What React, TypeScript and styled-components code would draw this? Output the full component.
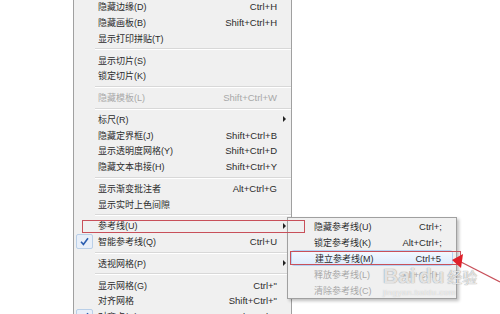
import React from 'react';
import styled, { createGlobalStyle } from 'styled-components';

const GlobalStyle = createGlobalStyle`
  html, body {
    margin: 0;
    padding: 0;
    background: #ffffff;
  }
`;

const Page = styled.div`
  position: relative;
  width: 500px;
  height: 314px;
  overflow: hidden;
  background: #ffffff;
  font-family: 'Liberation Sans', 'Noto Sans CJK SC', sans-serif;
`;

const Menu = styled.div`
  box-sizing: border-box;
  width: 219px;
  margin-left: 73px;
  margin-top: -1px;
  background: #f0f0f0;
  border-left: 1px solid #a0a0a0;
  border-right: 1px solid #a0a0a0;
`;

const Row = styled.div<{ $h?: number; $pl?: number; $pr?: number }>`
  display: flex;
  align-items: center;
  height: ${(p) => p.$h ?? 15.75}px;
  padding-left: ${(p) => p.$pl ?? 0}px;
  padding-right: ${(p) => p.$pr ?? 0}px;
  box-sizing: border-box;
`;

const HiRow = styled(Row)`
  margin: 0 3px;
  padding-left: ${(p) => (p.$pl ?? 0) - 3}px;
  padding-right: ${(p) => (p.$pr ?? 0) - 3}px;
  border: 1px solid #b4d2f4;
  border-radius: 3px;
  background: linear-gradient(#f4f9ff, #dcebfc);
`;

const Gutter = styled.div`
  width: 24px;
  height: 100%;
  display: flex;
  align-items: center;
  flex: none;
`;

const CheckBox = styled.div`
  box-sizing: border-box;
  width: 17px;
  height: 15px;
  margin-left: 2px;
  border: 1px solid #b9cfe8;
  border-radius: 2px;
  background: #e8eff9;
  display: flex;
  align-items: center;
  justify-content: center;
`;

const Label = styled.span<{ $off?: boolean }>`
  flex: 1;
  font-size: 9px;
  white-space: nowrap;
  color: ${(p) => (p.$off ? '#a8a8a8' : '#2c2c2c')};
`;

const Keys = styled.span<{ $off?: boolean }>`
  font-size: 9.5px;
  white-space: nowrap;
  color: ${(p) => (p.$off ? '#a8a8a8' : '#2c2c2c')};
`;

const ArrowCell = styled.div`
  width: 14px;
  flex: none;
  display: flex;
  justify-content: center;
  padding-left: 1px;
  box-sizing: border-box;
`;

const Caret = styled.span`
  width: 0;
  height: 0;
  border-top: 3px solid transparent;
  border-bottom: 3px solid transparent;
  border-left: 3px solid #222;
`;

const Sep = styled.div`
  height: 6px;
  display: flex;
  align-items: center;
  padding-left: 21px;
`;

const SepLine = styled.div`
  flex: 1;
  height: 0;
  border-top: 1px solid #d8d8d8;
  border-bottom: 1px solid #ffffff;
`;

const Sub = styled.div`
  position: absolute;
  left: 287px;
  top: 217px;
  width: 170px;
  box-sizing: border-box;
  padding: 0;
  background: #f0f0f0;
  border: 1px solid #a0a0a0;
  box-shadow: 2px 2px 3px rgba(0, 0, 0, 0.25);
`;

const RedBox = styled.div<{ $x: number; $y: number; $w: number; $h: number }>`
  position: absolute;
  left: ${(p) => p.$x}px;
  top: ${(p) => p.$y}px;
  width: ${(p) => p.$w}px;
  height: ${(p) => p.$h}px;
  box-sizing: border-box;
  border: 1.5px solid #c8505a;
`;

const Mark = styled.div`
  position: absolute;
  left: 383px;
  top: 264px;
  display: flex;
  flex-direction: column;
  align-items: flex-start;
  pointer-events: none;
`;

const MarkTop = styled.div`
  display: flex;
  align-items: center;
  gap: 3px;
  color: rgba(255, 255, 255, 0.75);
  text-shadow: 0 0 1px rgba(120, 120, 120, 0.6), 0 0 1px rgba(120, 120, 120, 0.6);
`;

const MarkBig = styled.span`
  font-family: 'Liberation Sans', sans-serif;
  font-size: 21px;
  font-weight: bold;
`;

const MarkCn = styled.span`
  font-family: 'Noto Sans CJK SC', sans-serif;
  font-size: 15px;
`;

const MarkUrl = styled.span`
  font-size: 8px;
  letter-spacing: 0.5px;
  color: rgba(255, 255, 255, 0.7);
  text-shadow: 0 0 1px rgba(120, 120, 120, 0.5);
`;

const Overlay = styled.svg`
  position: absolute;
  left: 0;
  top: 0;
  pointer-events: none;
`;

type Item =
  | { sep: true }
  | { label: string; keys?: string; off?: boolean; sub?: boolean; check?: boolean };

const items: Item[] = [
  { label: '隐藏边缘(D)', keys: 'Ctrl+H' },
  { label: '隐藏画板(B)', keys: 'Shift+Ctrl+H' },
  { label: '显示打印拼贴(T)' },
  { sep: true },
  { label: '显示切片(S)' },
  { label: '锁定切片(K)' },
  { sep: true },
  { label: '隐藏模板(L)', keys: 'Shift+Ctrl+W', off: true },
  { sep: true },
  { label: '标尺(R)', sub: true },
  { label: '隐藏定界框(J)', keys: 'Shift+Ctrl+B' },
  { label: '显示透明度网格(Y)', keys: 'Shift+Ctrl+D' },
  { label: '隐藏文本串接(H)', keys: 'Shift+Ctrl+Y' },
  { sep: true },
  { label: '显示渐变批注者', keys: 'Alt+Ctrl+G' },
  { label: '显示实时上色间隙' },
  { sep: true },
  { label: '参考线(U)', sub: true },
  { label: '智能参考线(Q)', keys: 'Ctrl+U', check: true },
  { sep: true },
  { label: '透视网格(P)', sub: true },
  { sep: true },
  { label: '显示网格(G)', keys: 'Ctrl+"' },
  { label: '对齐网格', keys: 'Shift+Ctrl+"' },
  { label: '对齐点(N)', keys: 'Alt+Ctrl+"', check: true },
];

const subItems = [
  { label: '隐藏参考线(U)', keys: 'Ctrl+;' },
  { label: '锁定参考线(K)', keys: 'Alt+Ctrl+;' },
  { label: '建立参考线(M)', keys: 'Ctrl+5', hi: true },
  { label: '释放参考线(L)', keys: 'Alt+Ctrl+;', off: true },
  { label: '清除参考线(C)', off: true },
];

const Check = () => (
  <svg width="9" height="9" viewBox="0 0 9 9">
    <path d="M1 4.8 L3.4 7.4 L8 1.2" fill="none" stroke="#2a5db0" strokeWidth="1.6" />
  </svg>
);

export default function App() {
  return (
    <Page>
      <GlobalStyle />
      <Menu>
        {items.map((it, i) =>
          'sep' in it ? (
            <Sep key={i}>
              <SepLine />
            </Sep>
          ) : (
            <Row key={i}>
              <Gutter>
                {it.check && (
                  <CheckBox>
                    <Check />
                  </CheckBox>
                )}
              </Gutter>
              <Label $off={it.off}>{it.label}</Label>
              {it.keys && <Keys $off={it.off}>{it.keys}</Keys>}
              <ArrowCell>{it.sub && <Caret />}</ArrowCell>
            </Row>
          )
        )}
      </Menu>

      <Sub>
        {subItems.map((it, i) => {
          const R = it.hi ? HiRow : Row;
          return (
            <R key={i} $h={16} $pl={26} $pr={14}>
              <Label $off={it.off}>{it.label}</Label>
              {it.keys && <Keys $off={it.off}>{it.keys}</Keys>}
            </R>
          );
        })}
      </Sub>

      <Mark>
        <MarkTop>
          <MarkBig>Bai</MarkBig>
          <MarkBig>du</MarkBig>
          <MarkCn>经验</MarkCn>
        </MarkTop>
        <MarkUrl>jingyan.baidu.com</MarkUrl>
      </Mark>

      <RedBox $x={82} $y={220} $w={223} $h={13} />
      <RedBox $x={290} $y={251} $w={171} $h={14} />

      <Overlay width={500} height={314}>
        <line x1="461" y1="262" x2="500" y2="282" stroke="#c8505a" strokeWidth="1.2" />
        <polygon points="452,260 463,254 461,268" fill="#e0202a" />
      </Overlay>
    </Page>
  );
}
